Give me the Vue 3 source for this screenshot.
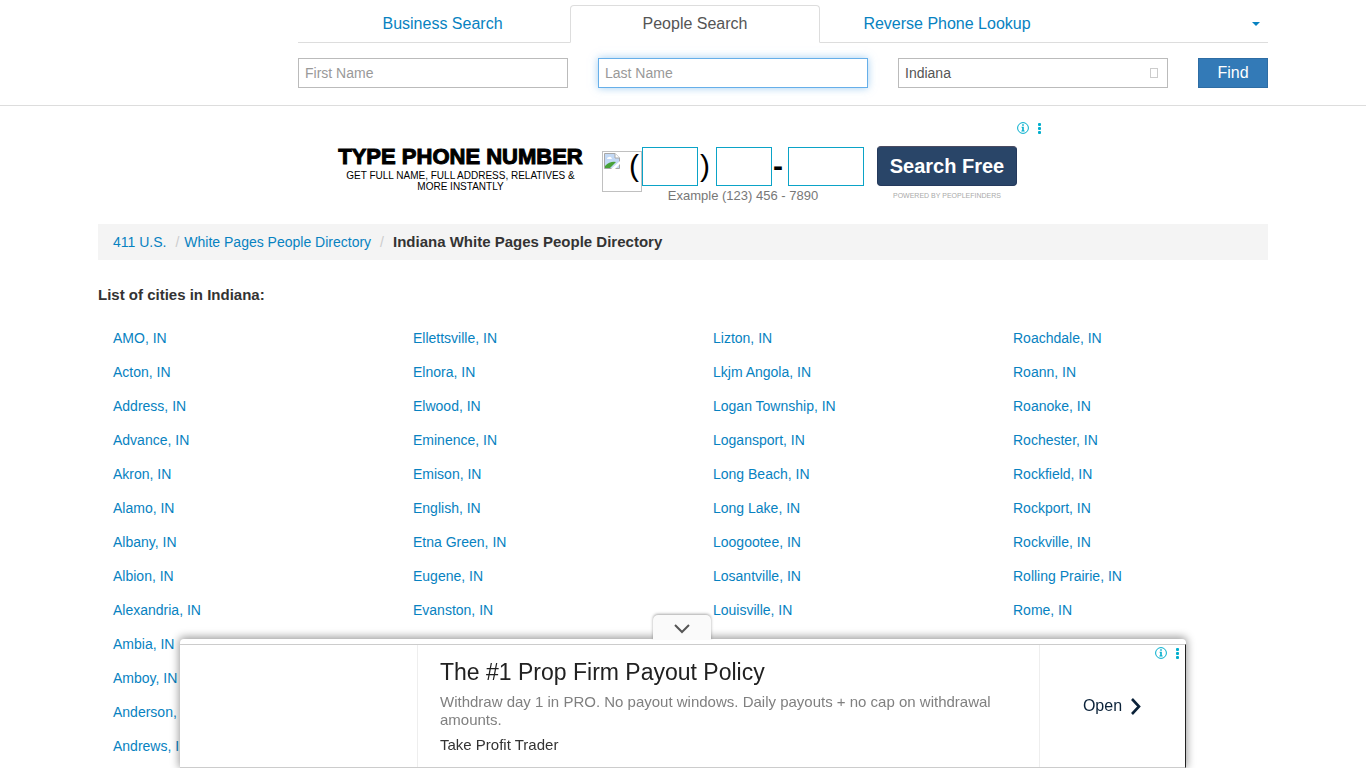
<!-- File: App.vue -->
<template>
  <header class="site-header">
    <div class="container header-inner">
      <nav class="tabs">
        <a href="#business" class="tab">Business Search</a>
        <a href="#people" class="tab active">People Search</a>
        <a href="#phone" class="tab">Reverse Phone Lookup</a>
        <button class="more" aria-label="More searches"><span class="caret"></span></button>
      </nav>

      <form class="search-form" @submit.prevent>
        <input v-model="firstName" type="text" placeholder="First Name" aria-label="First Name" />
        <input v-model="lastName" type="text" class="focused" placeholder="Last Name" aria-label="Last Name" />
        <div class="select-wrap">
          <select v-model="state" aria-label="State">
            <option value="Indiana">Indiana</option>
            <option value="Illinois">Illinois</option>
            <option value="Ohio">Ohio</option>
          </select>
          <span class="select-mark"></span>
        </div>
        <button type="submit" class="find">Find</button>
      </form>
    </div>
  </header>

  <!-- Phone lookup banner -->
  <section class="banner">
    <div class="banner-copy">
      <h2>TYPE PHONE NUMBER</h2>
      <p>GET FULL NAME, FULL ADDRESS, RELATIVES &amp; MORE INSTANTLY</p>
    </div>
    <div class="phone">
      <div class="phone-row">
        <span class="missing">
          <svg width="16" height="16" viewBox="0 0 16 16">
            <path d="M0.5 0.5H11L15.5 5V15.5H0.5Z" fill="#c3d9f5" stroke="#a8a8a8" />
            <path d="M11 0.5V5H15.5" fill="#fff" stroke="#a8a8a8" />
            <path d="M3 6Q3 4 5 4Q7 3 8 6Z" fill="#fff" />
            <path d="M1 15V13Q6 8 12 9L6 15Z" fill="#48a238" />
            <path d="M7 16L16 8V11L11 16Z" fill="#fff" />
          </svg>
        </span>
        <span class="paren open-paren">(</span>
        <input type="text" class="area" aria-label="Area code" />
        <span class="paren close-paren">)</span>
        <input type="text" class="area" aria-label="Prefix" />
        <span class="dash">-</span>
        <input type="text" class="line" aria-label="Line number" />
      </div>
      <div class="example">Example (123) 456 - 7890</div>
    </div>
    <div class="banner-cta">
      <button class="search-free">Search Free</button>
      <small>POWERED BY PEOPLEFINDERS</small>
    </div>
    <div class="ad-marks">
      <svg width="12" height="12" viewBox="0 0 12 12">
        <circle cx="6" cy="6" r="5.4" fill="none" stroke="#00aecd" />
        <path d="M5.2 2.3H6.8V3.7H5.2ZM4.6 4.8H6.8V8.4H7.6V9.4H4.4V8.4H5.2V5.7H4.6Z" fill="#00aecd" />
      </svg>
      <svg width="4" height="12" viewBox="0 0 4 12" fill="#00aecd">
        <rect x="1" y="1" width="3" height="3" rx="1" /><rect x="1" y="5" width="3" height="3" rx="1" /><rect x="1" y="9" width="3" height="3" rx="1" />
      </svg>
    </div>
  </section>

  <main class="container">
    <nav class="breadcrumb">
      <a href="#home">411 U.S.</a>
      <span class="slash">/</span>
      <a href="#white-pages">White Pages People Directory</a>
      <span class="slash last">/</span>
      <h1>Indiana White Pages People Directory</h1>
    </nav>

    <h3 class="list-title">List of cities in Indiana:</h3>

    <div class="cities">
      <ul v-for="(column, i) in columns" :key="i">
        <li v-for="city in column" :key="city">
          <a href="#city">{{ city }}, IN</a>
        </li>
      </ul>
    </div>
  </main>

  <!-- Sticky bottom ad -->
  <aside v-if="adOpen" class="sticky-ad">
    <button class="collapse" aria-label="Close ad" @click="adOpen = false">
      <svg width="16" height="10" viewBox="0 0 16 10">
        <path d="M1 1L8 8L15 1" fill="none" stroke="#555" stroke-width="2" />
      </svg>
    </button>
    <div class="ad-body">
      <div class="ad-media"></div>
      <div class="ad-copy">
        <h2>The #1 Prop Firm Payout Policy</h2>
        <p>Withdraw day 1 in PRO. No payout windows. Daily payouts + no cap on withdrawal amounts.</p>
        <div class="advertiser">Take Profit Trader</div>
      </div>
      <a href="#open" class="ad-open">
        Open
        <svg width="12" height="18" viewBox="0 0 12 18">
          <path d="M2 2L9 9.5L2 17" fill="none" stroke="#0b2239" stroke-width="2.6" />
        </svg>
      </a>
      <div class="ad-marks">
        <svg width="12" height="12" viewBox="0 0 12 12">
          <circle cx="6" cy="6" r="5.4" fill="none" stroke="#00aecd" />
          <path d="M5.2 2.3H6.8V3.7H5.2ZM4.6 4.8H6.8V8.4H7.6V9.4H4.4V8.4H5.2V5.7H4.6Z" fill="#00aecd" />
        </svg>
        <svg width="4" height="12" viewBox="0 0 4 12" fill="#00aecd">
          <rect x="1" y="1" width="3" height="3" rx="1" /><rect x="1" y="5" width="3" height="3" rx="1" /><rect x="1" y="9" width="3" height="3" rx="1" />
        </svg>
      </div>
    </div>
  </aside>
</template>

<script setup>
import { ref } from 'vue'

const firstName = ref('')
const lastName = ref('')
const state = ref('Indiana')
const adOpen = ref(true)

const columns = [
  ['AMO', 'Acton', 'Address', 'Advance', 'Akron', 'Alamo', 'Albany', 'Albion', 'Alexandria', 'Ambia', 'Amboy', 'Anderson', 'Andrews'],
  ['Ellettsville', 'Elnora', 'Elwood', 'Eminence', 'Emison', 'English', 'Etna Green', 'Eugene', 'Evanston'],
  ['Lizton', 'Lkjm Angola', 'Logan Township', 'Logansport', 'Long Beach', 'Long Lake', 'Loogootee', 'Losantville', 'Louisville'],
  ['Roachdale', 'Roann', 'Roanoke', 'Rochester', 'Rockfield', 'Rockport', 'Rockville', 'Rolling Prairie', 'Rome'],
]
</script>

<style>
body {
  margin: 0;
  background: #fff;
  color: #333;
  font-family: "Liberation Sans", Arial, sans-serif;
  font-size: 14px;
  line-height: 20px;
  overflow-x: hidden;
}
</style>

<style scoped>
* { box-sizing: border-box; }
h1, h2, h3, p, ul { margin: 0; padding: 0; }
a { color: #0782c1; text-decoration: none; }
input, select, button { font-family: inherit; }

.container { max-width: 1170px; margin: 0 auto; }

/* Header */
.site-header { border-bottom: 1px solid #ddd; padding: 5px 0 17px; }
.header-inner { padding-left: 200px; }
.tabs { display: grid; grid-template-columns: 272px 250px 254px 1fr; height: 38px; border-bottom: 1px solid #ddd; }
.tab {
  height: 38px;
  font-size: 16px;
  line-height: 38px;
  text-align: center;
}
.tab:first-child { padding-left: 17px; }
.tab.active {
  color: #555;
  background: #fff;
  border: 1px solid #ddd;
  border-bottom-color: #fff;
  border-radius: 4px 4px 0 0;
  line-height: 36px;
}
.more { background: transparent; border: 0; padding: 0 8px 2px; text-align: right; cursor: pointer; }
.caret { display: inline-block; border: 4px solid transparent; border-top-color: #0782c1; border-bottom: 0; vertical-align: middle; }

.search-form { display: grid; grid-template-columns: 1fr 1fr 1fr 70px; gap: 30px; margin-top: 15px; }
.search-form input, .search-form select {
  display: block;
  width: 100%;
  height: 30px;
  padding: 0 6px;
  border: 1px solid #bbb;
  border-radius: 0;
  background: #fff;
  color: #555;
  font-size: 14px;
  outline: 0;
  appearance: none;
}
.search-form input::placeholder { color: #999; opacity: 1; }
.search-form .focused { border-color: #66afe9; box-shadow: 0 0 8px rgba(102, 175, 233, 0.6); }
.select-wrap { position: relative; }
.select-mark { position: absolute; right: 10px; top: 10px; width: 8px; height: 10px; border: 1px solid #ccc; pointer-events: none; }
.find { height: 30px; border: 1px solid #2e6da4; background: #337ab7; color: #fff; font-size: 16px; padding: 0; cursor: pointer; }

/* Phone banner */
.banner {
  position: relative;
  display: flex;
  align-items: flex-start;
  width: 728px;
  max-width: 100%;
  height: 90px;
  margin: 16px auto 12px;
  padding: 24px 0 0 17px;
}
.banner-copy { width: 249px; text-align: center; color: #000; white-space: nowrap; }
.banner-copy h2 { font-size: 22px; font-weight: 700; line-height: 22px; -webkit-text-stroke: 1px #000; }
.banner-copy p { padding: 2px 6px 0; font-size: 10px; line-height: 11px; white-space: normal; }
.phone { width: 262px; margin-left: 17px; }
.phone-row { display: flex; align-items: flex-start; height: 40px; padding-top: 1px; }
.missing { width: 40px; height: 41px; margin-top: 4px; padding: 1px; border: 1px solid #c0c0c0; flex: none; }
.missing svg { display: block; }
.paren, .dash { color: #000; font-size: 30px; line-height: 38px; text-align: center; }
.open-paren { width: 14px; margin-left: -14px; padding-right: 2px; }
.close-paren { width: 18px; padding-right: 4px; }
.dash { width: 16px; padding-right: 4px; font-weight: 700; }
.phone-row input { height: 39px; padding: 0 4px; border: 1px solid #0ba3c7; font-size: 20px; outline: 0; }
.area { width: 56px; }
.line { width: 76px; }
.example { color: #777; font-size: 13px; line-height: 20px; text-align: center; padding-left: 20px; }
.banner-cta { width: 140px; margin-left: 13px; text-align: center; }
.search-free {
  display: block;
  width: 140px;
  height: 40px;
  padding: 0;
  border: 1px solid #24395c;
  border-top-color: #4b4b60;
  border-radius: 4px;
  background: #294568;
  color: #fff;
  font-size: 20px;
  font-weight: 700;
  cursor: pointer;
}
.banner-cta small { display: block; color: #aaa; font-size: 7px; line-height: 20px; }
.ad-marks { position: absolute; top: 0; right: 6px; display: flex; gap: 8px; }

/* Breadcrumb */
.breadcrumb { display: flex; align-items: center; height: 36px; padding: 0 15px; background: #f4f4f4; }
.breadcrumb h1 { font-size: 15px; line-height: 20px; }
.slash { color: #ccc; padding: 0 5px 0 9px; }
.slash.last { padding-right: 9px; }

.list-title { margin-top: 25px; font-size: 15px; line-height: 20px; }

/* City list */
.cities { display: grid; grid-template-columns: repeat(4, 1fr); margin: 16px -30px 0 0; }
.cities ul { list-style: none; padding: 0 15px; }
.cities li { line-height: 34px; }

/* Sticky ad */
.sticky-ad {
  position: fixed;
  bottom: 0;
  left: 0;
  right: 0;
  width: 1006px;
  max-width: 100%;
  margin: 0 auto;
  padding-top: 5px;
  border-radius: 4px 4px 0 0;
  background: #fff;
  box-shadow: 0 -1px 8px 1px rgba(0, 0, 0, 0.4);
}
.collapse {
  position: absolute;
  top: -24px;
  left: 50%;
  width: 58px;
  height: 25px;
  margin-left: -30px;
  padding: 4px 0 0;
  border: 0;
  border-radius: 5px 5px 0 0;
  background: #fafafa;
  box-shadow: 0 -1px 3px rgba(0, 0, 0, 0.35);
  clip-path: inset(-4px -4px 0);
  cursor: pointer;
}
.ad-body { position: relative; display: flex; height: 124px; border: 1px solid #ccc; border-left: 0; border-right-color: #222; }
.ad-media { width: 238px; border-right: 1px solid #eee; }
.ad-copy { flex: 1; padding: 12px 22px 0; }
.ad-copy h2 { color: #212121; font-size: 23px; font-weight: 400; line-height: 30px; }
.ad-copy p { margin-top: 6px; color: #808080; font-size: 15px; line-height: 18px; }
.advertiser { margin-top: 6px; color: #333; font-size: 15px; line-height: 20px; }
.ad-open { display: flex; align-items: center; justify-content: center; gap: 8px; width: 146px; border-left: 1px solid #eee; color: #0b2239; font-size: 16px; }
.ad-body .ad-marks { top: 2px; }
</style>
